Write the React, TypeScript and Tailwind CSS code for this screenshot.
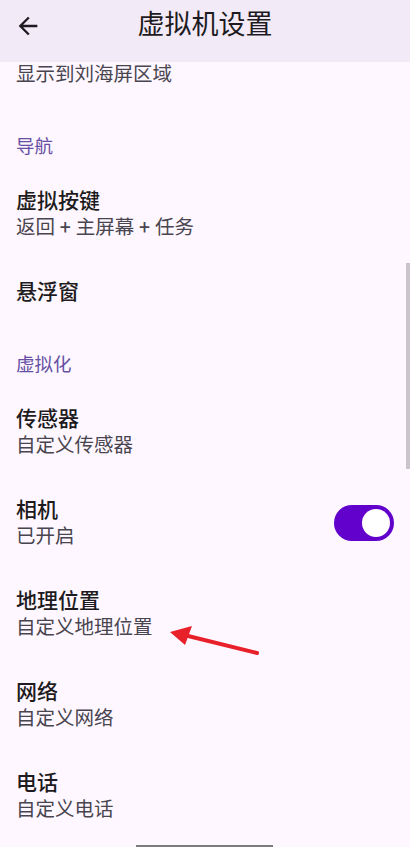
import React from "react"

type Item = {
  title?: string
  summary?: string
  toggle?: boolean
}

type Section = {
  header?: string
  items: Item[]
}

const sections: Section[] = [
  { items: [{ summary: "显示到刘海屏区域" }] },
  {
    header: "导航",
    items: [
      { title: "虚拟按键", summary: "返回 + 主屏幕 + 任务" },
      { title: "悬浮窗" },
    ],
  },
  {
    header: "虚拟化",
    items: [
      { title: "传感器", summary: "自定义传感器" },
      { title: "相机", summary: "已开启", toggle: true },
      { title: "地理位置", summary: "自定义地理位置" },
      { title: "网络", summary: "自定义网络" },
      { title: "电话", summary: "自定义电话" },
    ],
  },
]

function Switch() {
  return (
    <div className="flex h-[36px] w-[60px] shrink-0 items-center justify-end rounded-full bg-[#6200cc] px-[4px]">
      <div className="h-[28px] w-[28px] rounded-full bg-white" />
    </div>
  )
}

function PrefRow({ item }: { item: Item }) {
  // the first row is scrolled under the app bar, only its summary shows
  if (!item.title) {
    return (
      <div className="px-4 pb-[18px]">
        <div className="text-[19.5px] leading-[26px] text-[#49454f]">
          {item.summary}
        </div>
      </div>
    )
  }
  return (
    <div className="flex items-center px-4 pt-[19px] pb-[18px]">
      <div className="flex-1">
        <div className="text-[21px] font-medium leading-[28px] text-[#1d1b20]">
          {item.title}
        </div>
        {item.summary ? (
          <div className="text-[19.5px] leading-[26px] text-[#49454f]">
            {item.summary}
          </div>
        ) : null}
      </div>
      {item.toggle ? <Switch /> : null}
    </div>
  )
}

export default function App() {
  return (
    <div className="relative flex h-[847px] w-[410px] flex-col overflow-hidden bg-[#fef7ff] font-['Roboto','Noto_Sans_CJK_SC',sans-serif]">
      <header className="relative z-10 h-[62px] shrink-0 bg-[#f3eaf8]">
        <div className="grid h-[52px] grid-cols-[64px_1fr_64px] items-center">
          <svg
            viewBox="0 0 24 24"
            width="28"
            height="28"
            className="ml-[14px] mt-[-1px]"
            fill="#1d1b20"
          >
            <path d="M20 11H7.83l5.59-5.59L12 4l-8 8 8 8 1.41-1.41L7.83 13H20v-2z" />
          </svg>
          <h1 className="mt-[-2px] text-center text-[27px] font-normal leading-[36px] text-[#1d1b20]">
            虚拟机设置
          </h1>
          <div />
        </div>
      </header>

      <main className="flex-1 overflow-hidden">
        {sections.map((section, i) => (
          <section key={i}>
            {section.header ? (
              <div className="px-4 pt-[29px] pb-[9px] text-[18.5px] font-normal leading-[24px] text-[#6750a4]">
                {section.header}
              </div>
            ) : null}
            {section.items.map((item, j) => (
              <PrefRow key={j} item={item} />
            ))}
          </section>
        ))}
      </main>

      {/* scrollbar */}
      <div className="absolute right-0 top-[263px] h-[206px] w-[4px] bg-[#c9c5cb]" />

      {/* annotation arrow */}
      <svg
        className="absolute left-0 top-0"
        width="410"
        height="847"
        viewBox="0 0 410 847"
        fill="none"
      >
        <line
          x1="257"
          y1="653"
          x2="180"
          y2="634"
          stroke="#e8202a"
          strokeWidth="4"
          strokeLinecap="round"
        />
        <path d="M170 632 L192 626 L185 645 Z" fill="#e8202a" />
      </svg>

      {/* gesture handle */}
      <div className="absolute bottom-0 left-[136px] h-[2px] w-[137px] bg-[#7c7c7e]" />
    </div>
  )
}
